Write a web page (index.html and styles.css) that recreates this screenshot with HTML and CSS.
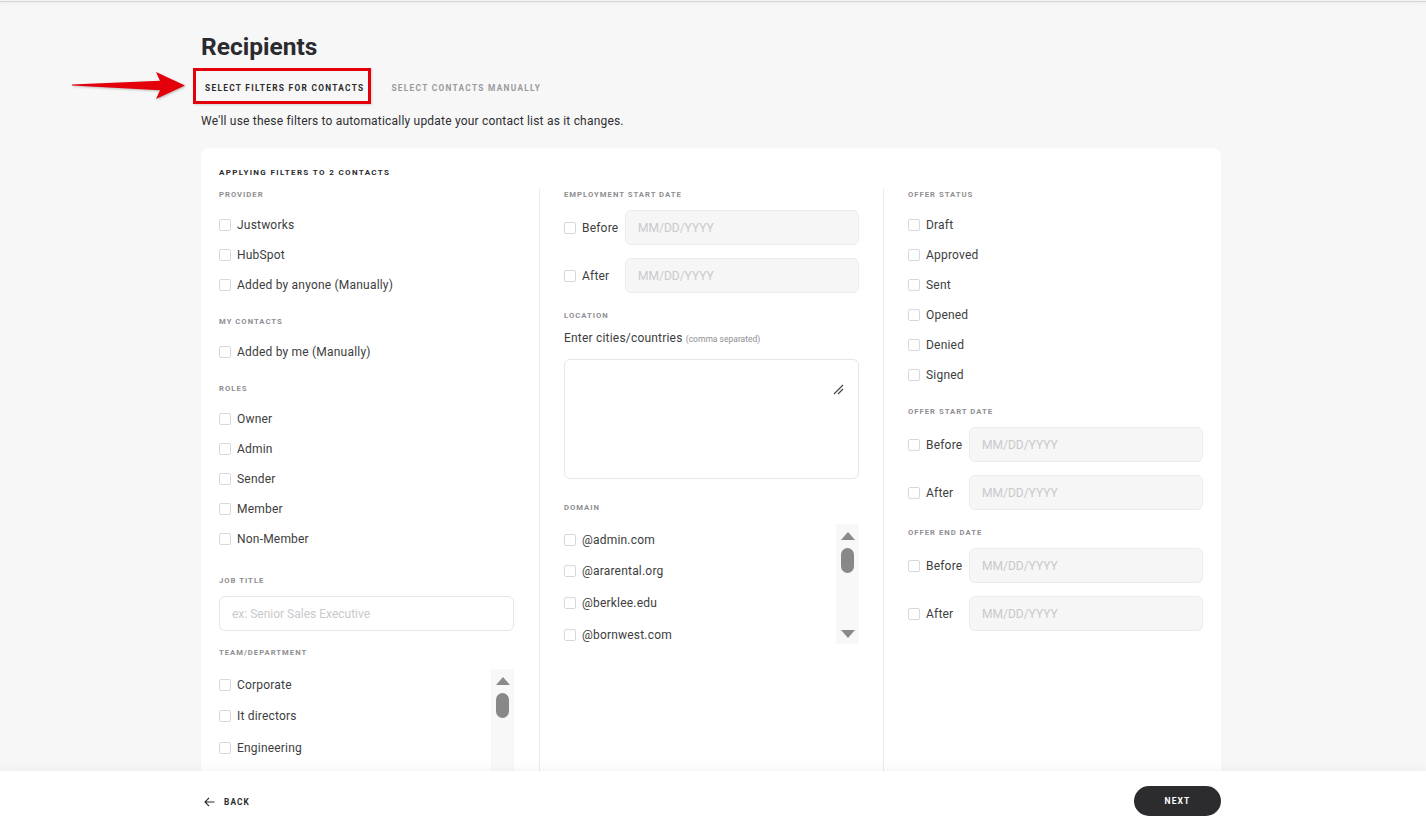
FILE: index.html
```html
<!DOCTYPE html>
<html lang="en">
<head>
    <meta charset="UTF-8">
    <meta name="viewport" content="width=device-width, initial-scale=1.0">
    <title>Recipients</title>
    <link rel="stylesheet" href="styles.css">
</head>
<body>

<div class="top-edge"></div>

<main class="page">
    <div class="container">
        <h1>Recipients</h1>

        <div class="tabs">
            <div class="tab active">Select filters for contacts</div>
            <div class="tab">Select contacts manually</div>
            <!-- annotation arrow pointing at the active tab -->
            <svg class="callout-arrow" width="130" height="34" viewBox="0 0 130 34">
                <polygon points="8,15.4 96,11.8 92,3 121,16.5 92,30 96,21.2 8,16.6" fill="#e3000b"/>
            </svg>
        </div>

        <p class="intro">We'll use these filters to automatically update your contact list as it changes.</p>

        <div class="card">
            <h2>Applying filters to 2 contacts</h2>

            <div class="columns">
                <!-- column 1 -->
                <div class="column">
                    <div class="section">
                        <div class="label">Provider</div>
                        <label class="check"><input type="checkbox"><span>Justworks</span></label>
                        <label class="check"><input type="checkbox"><span>HubSpot</span></label>
                        <label class="check"><input type="checkbox"><span>Added by anyone (Manually)</span></label>
                    </div>
                    <div class="section">
                        <div class="label">My contacts</div>
                        <label class="check"><input type="checkbox"><span>Added by me (Manually)</span></label>
                    </div>
                    <div class="section roles">
                        <div class="label">Roles</div>
                        <label class="check"><input type="checkbox"><span>Owner</span></label>
                        <label class="check"><input type="checkbox"><span>Admin</span></label>
                        <label class="check"><input type="checkbox"><span>Sender</span></label>
                        <label class="check"><input type="checkbox"><span>Member</span></label>
                        <label class="check"><input type="checkbox"><span>Non-Member</span></label>
                    </div>
                    <div class="section">
                        <div class="label">Job title</div>
                        <input class="text-input" type="text" placeholder="ex: Senior Sales Executive">
                    </div>
                    <div class="section">
                        <div class="label">Team/department</div>
                        <div class="scroll-list">
                            <div class="scroll-items">
                                <label class="check tall"><input type="checkbox"><span>Corporate</span></label>
                                <label class="check tall"><input type="checkbox"><span>It directors</span></label>
                                <label class="check tall"><input type="checkbox"><span>Engineering</span></label>
                            </div>
                            <div class="scrollbar">
                                <span class="arrow-up"></span>
                                <span class="thumb"></span>
                                <span class="spacer"></span>
                                <span class="arrow-down"></span>
                            </div>
                        </div>
                    </div>
                </div>

                <!-- column 2 -->
                <div class="column">
                    <div class="section dates">
                        <div class="label">Employment start date</div>
                        <div class="date-row">
                            <label class="check date-check"><input type="checkbox"><span>Before</span></label>
                            <input class="date-input" type="text" placeholder="MM/DD/YYYY">
                        </div>
                        <div class="date-row">
                            <label class="check date-check"><input type="checkbox"><span>After</span></label>
                            <input class="date-input" type="text" placeholder="MM/DD/YYYY">
                        </div>
                    </div>
                    <div class="section location">
                        <div class="label">Location</div>
                        <div class="hint">Enter cities/countries <small>(comma separated)</small></div>
                        <div class="textarea">
                            <svg class="grip" width="11" height="11" viewBox="0 0 11 11">
                                <path d="M1 10 L10 1 M5 10 L10 5" stroke="#444" stroke-width="1.2" fill="none"/>
                            </svg>
                        </div>
                    </div>
                    <div class="section">
                        <div class="label">Domain</div>
                        <div class="scroll-list">
                            <div class="scroll-items">
                                <label class="check tall"><input type="checkbox"><span>@admin.com</span></label>
                                <label class="check tall"><input type="checkbox"><span>@ararental.org</span></label>
                                <label class="check tall"><input type="checkbox"><span>@berklee.edu</span></label>
                                <label class="check tall"><input type="checkbox"><span>@bornwest.com</span></label>
                            </div>
                            <div class="scrollbar">
                                <span class="arrow-up"></span>
                                <span class="thumb"></span>
                                <span class="spacer"></span>
                                <span class="arrow-down"></span>
                            </div>
                        </div>
                    </div>
                </div>

                <!-- column 3 -->
                <div class="column">
                    <div class="section">
                        <div class="label">Offer status</div>
                        <label class="check"><input type="checkbox"><span>Draft</span></label>
                        <label class="check"><input type="checkbox"><span>Approved</span></label>
                        <label class="check"><input type="checkbox"><span>Sent</span></label>
                        <label class="check"><input type="checkbox"><span>Opened</span></label>
                        <label class="check"><input type="checkbox"><span>Denied</span></label>
                        <label class="check"><input type="checkbox"><span>Signed</span></label>
                    </div>
                    <div class="section dates">
                        <div class="label">Offer start date</div>
                        <div class="date-row">
                            <label class="check date-check"><input type="checkbox"><span>Before</span></label>
                            <input class="date-input" type="text" placeholder="MM/DD/YYYY">
                        </div>
                        <div class="date-row">
                            <label class="check date-check"><input type="checkbox"><span>After</span></label>
                            <input class="date-input" type="text" placeholder="MM/DD/YYYY">
                        </div>
                    </div>
                    <div class="section dates">
                        <div class="label">Offer end date</div>
                        <div class="date-row">
                            <label class="check date-check"><input type="checkbox"><span>Before</span></label>
                            <input class="date-input" type="text" placeholder="MM/DD/YYYY">
                        </div>
                        <div class="date-row">
                            <label class="check date-check"><input type="checkbox"><span>After</span></label>
                            <input class="date-input" type="text" placeholder="MM/DD/YYYY">
                        </div>
                    </div>
                </div>
            </div>
        </div>
    </div>
</main>

<footer class="footer">
    <div class="container footer-inner">
        <a class="back" href="#">
            <svg width="11" height="10" viewBox="0 0 11 10">
                <path d="M10.5 5 H1 M5 0.8 L1 5 L5 9.2" stroke="#2b2b2e" stroke-width="1.1" fill="none"/>
            </svg>
            <span>Back</span>
        </a>
        <button class="next">Next</button>
    </div>
</footer>

</body>
</html>
```

FILE: styles.css
```css
html, body {
    height: 100%;
}

body {
    margin: 0;
    padding: 0 4px 0 0;
    background-color: #f7f7f7;
    font-family: 'Roboto', 'Liberation Sans', sans-serif;
    color: #3a3a3d;
    display: flex;
    flex-direction: column;
    overflow: hidden;
}

.top-edge {
    height: 1px;
    margin-top: 1px;
    background-color: #d4d4d4;
    box-shadow: 0 1px 3px rgba(0, 0, 0, 0.12);
    margin-right: -4px;
}

.page {
    flex: 1;
    overflow: hidden;
}

.container {
    width: 1020px;
    margin: 0 auto;
}

h1 {
    margin: 30px 0 0;
    font-size: 24.5px;
    line-height: 30px;
    font-weight: 700;
    color: #2b2b2f;
}

.tabs {
    position: relative;
    display: flex;
    align-items: center;
    gap: 20px;
    margin: 6px 0 0 -8px;
}

.tab {
    padding-top: 4px;
    font-size: 8.3px;
    font-weight: 700;
    letter-spacing: 1.3px;
    text-transform: uppercase;
    color: #9a9a9c;
}

.tab.active {
    box-sizing: border-box;
    height: 36px;
    display: flex;
    align-items: center;
    padding: 4px 4px 0 9px;
    border: 3px solid #e3000b;
    color: #2b2b2f;
    box-shadow: 1px 1px 2px rgba(0, 0, 0, 0.15);
}

.callout-arrow {
    position: absolute;
    left: -129px;
    top: 1px;
    filter: drop-shadow(1px 1px 1px rgba(0, 0, 0, 0.25));
}

.intro {
    margin: 9px 0 0;
    font-size: 12px;
    line-height: 16px;
    letter-spacing: 0.2px;
    color: #2e2e31;
}

.card {
    margin-top: 19px;
    padding: 19px 18px 0;
    background-color: #fff;
    border-radius: 8px;
}

h2 {
    margin: 0;
    font-size: 8px;
    line-height: 12px;
    font-weight: 700;
    letter-spacing: 1.35px;
    text-transform: uppercase;
    color: #2b2b2f;
}

.columns {
    display: flex;
    margin-top: 10px;
}

.column {
    flex: 1;
    min-width: 0;
    padding: 0 24px;
    border-left: 1px solid #ececec;
}

.column:first-child {
    padding-left: 0;
    padding-right: 25px;
    border-left: none;
}

.column:last-child {
    padding-right: 0;
}

.section {
    margin-bottom: 16px;
}

.section.roles {
    margin-bottom: 21px;
}

.section.dates {
    margin-bottom: 17px;
}

.label {
    font-size: 7.7px;
    line-height: 12px;
    font-weight: 700;
    letter-spacing: 1px;
    text-transform: uppercase;
    color: #8e8e92;
    margin-bottom: 9px;
}

.section.location .label {
    margin-bottom: 8px;
}

.check {
    display: flex;
    align-items: center;
    gap: 6px;
    height: 30px;
    font-size: 12px;
    letter-spacing: 0.2px;
    color: #3d3d40;
}

.check.tall {
    height: 31.6px;
}

.check input {
    appearance: none;
    -webkit-appearance: none;
    margin: 0;
    width: 12px;
    height: 12px;
    border: 1px solid #d8d8dc;
    border-radius: 2px;
    background-color: #fff;
    flex-shrink: 0;
}

.text-input {
    display: block;
    box-sizing: border-box;
    width: 100%;
    height: 35px;
    padding: 0 12px;
    border: 1px solid #e6e6e8;
    border-radius: 6px;
    font-family: inherit;
    font-size: 12px;
    background-color: #fff;
}

.text-input::placeholder,
.date-input::placeholder {
    color: #c9c9cc;
}

.date-row {
    display: flex;
    align-items: center;
    height: 35px;
    margin-bottom: 13px;
}

.date-row:last-child {
    margin-bottom: 0;
}

.date-check {
    width: 61px;
    flex-shrink: 0;
}

.date-input {
    flex: 1;
    min-width: 0;
    box-sizing: border-box;
    height: 35px;
    padding: 0 12px;
    border: 1px solid #ececee;
    border-radius: 6px;
    background-color: #f6f6f6;
    font-family: inherit;
    font-size: 12px;
}

.hint {
    font-size: 12px;
    line-height: 16px;
    color: #3d3d40;
    letter-spacing: 0.2px;
}

.hint small {
    font-size: 8.5px;
    color: #8e8e92;
    letter-spacing: 0;
}

.textarea {
    position: relative;
    height: 118px;
    margin-top: 12px;
    margin-bottom: 23px;
    border: 1px solid #e6e6e8;
    border-radius: 6px;
    background-color: #fff;
}

.grip {
    position: absolute;
    right: 14px;
    top: 24px;
}

.scroll-list {
    display: flex;
    height: 120px;
    margin-top: 10px;
    overflow: hidden;
}

.scroll-items {
    flex: 1;
    overflow: hidden;
}

.scrollbar {
    width: 23px;
    display: flex;
    flex-direction: column;
    align-items: center;
    background-color: #f8f8f8;
}

.arrow-up,
.arrow-down {
    width: 0;
    height: 0;
    border-left: 7px solid transparent;
    border-right: 7px solid transparent;
}

.arrow-up {
    margin-top: 8px;
    border-bottom: 8px solid #8a8a8a;
}

.arrow-down {
    margin-bottom: 6px;
    border-top: 8px solid #8a8a8a;
}

.thumb {
    width: 13px;
    height: 25px;
    margin-top: 8px;
    border-radius: 7px;
    background-color: #888;
}

.spacer {
    flex: 1;
}

.footer {
    height: 55px;
    flex-shrink: 0;
    background-color: #fff;
    box-shadow: 0 -3px 10px rgba(0, 0, 0, 0.04);
    margin-right: -4px;
    padding-right: 4px;
    position: relative;
}

.footer-inner {
    height: 100%;
    display: flex;
    align-items: center;
    justify-content: space-between;
}

.back {
    display: flex;
    align-items: center;
    gap: 9px;
    margin: 7px 0 0 3px;
    text-decoration: none;
    font-size: 8.3px;
    font-weight: 700;
    letter-spacing: 1.1px;
    text-transform: uppercase;
    color: #2b2b2e;
}

.next {
    width: 87px;
    height: 30px;
    margin-top: 5px;
    border: none;
    border-radius: 15px;
    background-color: #2c2c2e;
    color: #fff;
    font-family: inherit;
    font-size: 8.5px;
    font-weight: 700;
    letter-spacing: 1.1px;
    text-transform: uppercase;
    cursor: pointer;
}
```
